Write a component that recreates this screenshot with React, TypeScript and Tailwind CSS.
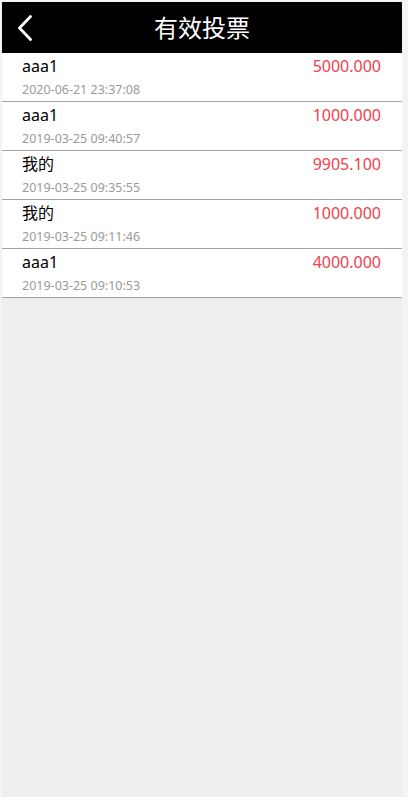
import React from "react";

interface Vote {
  name: string;
  amount: string;
  time: string;
}

const votes: Vote[] = [
  { name: "aaa1", amount: "5000.000", time: "2020-06-21 23:37:08" },
  { name: "aaa1", amount: "1000.000", time: "2019-03-25 09:40:57" },
  { name: "我的", amount: "9905.100", time: "2019-03-25 09:35:55" },
  { name: "我的", amount: "1000.000", time: "2019-03-25 09:11:46" },
  { name: "aaa1", amount: "4000.000", time: "2019-03-25 09:10:53" },
];

const font = { fontFamily: '"Noto Sans", "Noto Sans CJK SC", sans-serif' };

const App: React.FC = () => {
  return (
    <div className="min-h-[797px] w-[408px] bg-[#f4f4f6] pt-[2px]" style={font}>
      <div className="ml-[2px] w-[400px] min-h-[795px] bg-[#efefef]">
        {/* Header */}
        <header className="relative h-[51px] bg-black flex items-center justify-center">
          <button className="absolute left-[12px] top-[11px] w-[22px] h-[30px] flex items-center justify-center" aria-label="back">
            <svg width="16" height="26" viewBox="0 0 16 26" fill="none">
              <path d="M13.5 1.5 L2.5 13 L13.5 24.5" stroke="white" strokeWidth="2.8" strokeLinecap="round" strokeLinejoin="round" />
            </svg>
          </button>
          <h1 className="text-white text-[24px] leading-none">有效投票</h1>
        </header>

        {/* List */}
        <ul className="bg-white">
          {votes.map((v, i) => (
            <li key={i} className="h-[49px] border-b border-[#a3a3a3] pl-[20px] pr-[21px]">
              <div className="flex items-center justify-between h-[26px]">
                <span className="text-[16px] text-black">{v.name}</span>
                <span className="text-[16px] text-[#f03e4e]">{v.amount}</span>
              </div>
              <div className="h-[22px] flex items-center text-[12.5px] text-[#9a9a9a]">{v.time}</div>
            </li>
          ))}
        </ul>
      </div>
    </div>
  );
};

export default App;
